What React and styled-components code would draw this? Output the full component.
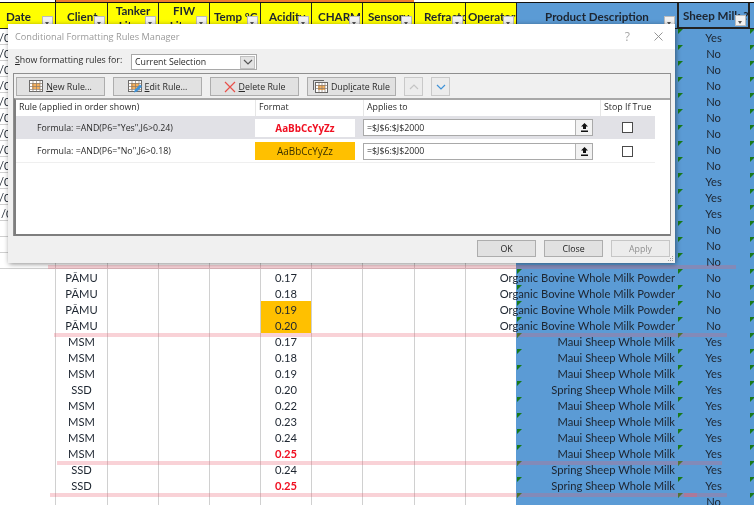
import React from "react";
import styled, { createGlobalStyle } from "styled-components";

const Global = createGlobalStyle`
  html, body { margin: 0; padding: 0; background: #fff; }
  * { box-sizing: border-box; }
`;

const Page = styled.div`
  position: relative;
  width: 754px;
  height: 505px;
  overflow: hidden;
  background: #fff;
  font-family: Lato, "Open Sans", sans-serif;
  color: #1d2530;
  filter: blur(0.3px);
`;

const COLS = "55px 52px 51px 51px 51px 51px 51px 52px 51px 51px 161px 72px 5px";

const TopStrip = styled.div`
  display: grid;
  grid-template-columns: 55px 359px 1fr;
  height: 3px;
  border-bottom: 1px solid #111;
`;
const Orange = styled.div`
  background: #ed7d31;
  border-left: 1px solid #111;
`;
const Row = styled.div`
  display: grid;
  grid-template-columns: ${COLS};
  height: ${p => p.$h || 16}px;
`;
const HeadCell = styled.div`
  position: relative;
  overflow: hidden;
  display: flex;
  align-items: center;
  justify-content: center;
  padding: 1px 2px 0;
  text-align: center;
  line-height: 15px;
  font-size: 11.6px;
  font-weight: 700;
  background: ${p => (p.$blue ? "#5b9bd5" : "#ffff00")};
  border-left: 1px solid #222;
  border-bottom: 1px solid #222;
  white-space: ${p => (p.$wrap ? "normal" : "nowrap")};
  ${p => p.$wrap && "align-items: flex-start; padding-top: 0;"}
  ${p => p.$pad !== undefined && `justify-content: flex-start; padding-left: ${p.$pad}px;`}
  ${p => p.$box && "border-left-width: 2px; border-right: 1px solid #222; border-bottom-width: 2px;"}
  ${p => p.$edge && "border-left: 0;"}
`;
const Filter = styled.span`
  position: absolute;
  right: 2px;
  bottom: 1px;
  width: 11px;
  height: 11px;
  background: #f2f2f2;
  border: 1px solid #bcbcbc;
  &::after {
    content: "";
    position: absolute;
    left: 2px;
    top: 5px;
    border: 2.5px solid transparent;
    border-top: 3px solid #555;
    border-bottom: 0;
  }
`;
const Cell = styled.div`
  position: relative;
  display: flex;
  align-items: center;
  justify-content: ${p => (p.$align === "right" ? "flex-end" : p.$align === "left" ? "flex-start" : "center")};
  padding-top: 1px;
  font-size: 11.2px;
  line-height: 15px;
  white-space: nowrap;
  overflow: ${p => (p.$spill ? "visible" : "hidden")};
  background: ${p => p.$bg || "#fff"};
  color: ${p => p.$color || "#1d2530"};
  font-weight: ${p => (p.$bold ? 700 : 400)};
  border-left: 1px solid ${p => (p.$bg === "#5b9bd5" ? "#5b9bd5" : "#d0d0d0")};
  border-bottom: 1px solid ${p => (p.$bg === "#5b9bd5" ? "#5b9bd5" : p.$bg ? p.$bg : "#d0d0d0")};
  ${p => p.$edge && "border-left: 0;"}
  ${p => p.$tri && `
    &::before {
      content: "";
      position: absolute;
      left: 0;
      top: 0;
      z-index: 1;
      border-top: 5px solid #1a7a1a;
      border-right: 5px solid transparent;
    }
  `}
`;
const Spill = styled.span`
  position: relative;
  margin-right: 2px;
  z-index: 2;
`;
const DateText = styled.span`
  margin-left: ${p => p.$x}px;
`;

const Highlight = styled.div`
  position: absolute;
  z-index: 3;
  left: ${p => p.$x}px;
  top: ${p => p.$y}px;
  width: ${p => p.$w}px;
  height: 4px;
  background: rgba(232, 95, 110, ${p => p.$a || 0.28});
  filter: blur(0.7px);
`;

/* Dialog */
const Dialog = styled.div`
  position: absolute;
  z-index: 10;
  left: 8px;
  top: 24px;
  width: 667px;
  height: 239px;
  display: flex;
  flex-direction: column;
  background: #f0f0f0;
  box-shadow: 1px 1px 5px rgba(0, 0, 0, 0.45);
  font-family: "Open Sans", sans-serif;
  font-size: 8.8px;
  color: #2a2a2a;
  white-space: nowrap;
`;
const TitleBar = styled.div`
  height: 25px;
  flex: none;
  display: flex;
  align-items: center;
  background: #fff;
  padding: 0 12px 1px 7px;
  color: #9a9a9a;
  font-size: 9.2px;
`;
const Title = styled.div`
  flex: 1;
`;
const Help = styled.span`
  color: #a8a8a8;
  font-size: 12px;
  margin-right: 24px;
`;
const ScopeRow = styled.div`
  height: 24px;
  flex: none;
  display: flex;
  align-items: center;
  padding: 2px 0 0 7px;
`;
const ScopeLabel = styled.span`
  width: 116px;
  margin-top: -4px;
`;
const Select = styled.div`
  width: 126px;
  height: 16px;
  display: flex;
  align-items: center;
  justify-content: space-between;
  background: #fff;
  border: 1px solid #a9a9a9;
  padding: 0 1px 0 3px;
`;
const SelectBtn = styled.span`
  width: 15px;
  height: 13px;
  display: flex;
  align-items: center;
  justify-content: center;
  background: #e3e3e3;
  border: 1px solid #c0c0c0;
`;
const Panel = styled.div`
  flex: none;
  height: 163px;
  margin: 0 4px 0 5px;
  border: 1px solid #8f8f8f;
  border-bottom: 0;
  display: flex;
  flex-direction: column;
`;
const Toolbar = styled.div`
  height: 24px;
  flex: none;
  display: flex;
  align-items: center;
  gap: 8px;
  padding: 1px 0 0 2px;
`;
const ToolButton = styled.div`
  width: ${p => p.$w || 89}px;
  height: 19px;
  display: flex;
  align-items: center;
  justify-content: center;
  gap: 3px;
  background: #e1e1e1;
  border: 1px solid #adadad;
  ${p => p.$dim && "background: #ececec; border-color: #c9c9c9;"}
`;
const List = styled.div`
  flex: 1;
  background: #fff;
  border: 2px solid #7e7e7e;
  border-top-color: #a8a8a8;
  border-right: 0;
  display: flex;
  flex-direction: column;
`;
const ListHead = styled.div`
  display: grid;
  grid-template-columns: 239px 108px 237px 55px;
  height: 16px;
  flex: none;
  align-items: center;
`;
const HeadLabel = styled.div`
  padding-left: 3px;
  height: 16px;
  line-height: 15px;
  border-left: ${p => (p.$first ? "0" : "1px solid #e6e6e6")};
`;
const RuleRow = styled.div`
  display: grid;
  grid-template-columns: 239px 108px 237px 55px;
  align-items: center;
  width: 639px;
  height: 23px;
  background: ${p => (p.$active ? "#e1e1e6" : "#fff")};
  border-bottom: ${p => (p.$active ? "0" : "1px solid #efefef")};
  margin-bottom: ${p => (p.$active ? "1px" : "0")};
`;
const Formula = styled.div`
  padding-left: 21px;
`;
const Swatch = styled.div`
  width: 100px;
  height: 18px;
  display: flex;
  align-items: center;
  justify-content: center;
  font-size: 9.9px;
  font-weight: ${p => (p.$red ? 700 : 400)};
  background: ${p => (p.$red ? "#fff" : "#ffc000")};
  color: ${p => (p.$red ? "#f01022" : "#3b3000")};
`;
const RangeInput = styled.div`
  width: 230px;
  height: 17px;
  display: flex;
  align-items: center;
  justify-content: space-between;
  background: #fff;
  border: 1px solid #a9a9a9;
  padding-left: 3px;
`;
const RangeBtn = styled.span`
  width: 17px;
  height: 15px;
  display: flex;
  align-items: center;
  justify-content: center;
  background: #f2f2f2;
  border-left: 1px solid #b5b5b5;
`;
const CheckWrap = styled.div`
  display: flex;
  justify-content: center;
  padding-right: 1px;
`;
const Check = styled.span`
  width: 11px;
  height: 11px;
  background: #fff;
  border: 1px solid #4a4a4a;
`;
const Footer = styled.div`
  flex: 1;
  display: flex;
  justify-content: flex-end;
  align-items: flex-start;
  gap: 8px;
  padding: 4px 5px 0 0;
  position: relative;
`;
const DialogButton = styled.div`
  width: 59px;
  height: 17px;
  display: flex;
  align-items: center;
  justify-content: center;
  background: #e1e1e1;
  border: 1px solid #adadad;
  color: ${p => (p.$off ? "#8f8f8f" : "#222")};
  ${p => p.$off && "background: #ececec; border-color: #c6c6c6;"}
`;
const Grip = styled.svg`
  position: absolute;
  right: 1px;
  bottom: 1px;
`;
const U = styled.span`
  text-decoration: underline;
  text-underline-offset: 1px;
`;

/* Icons */
const GridIcon = ({ pencil }) => (
  <svg width="14" height="13" viewBox="0 0 14 13">
    <rect x="0.5" y="0.5" width="13" height="11" fill="#fff" stroke="#6b6b6b" />
    <rect x="3" y="3" width="8" height="6" fill="#f7b15c" />
    <path d="M0.5 3.5H13.5M0.5 6.5H13.5M0.5 9.5H13.5M4 .5V11.5M7.5 .5V11.5M11 .5V11.5" stroke="#8a7a6a" strokeWidth="0.7" fill="none" />
    {pencil && <path d="M6 12.5l1-3 5-5 2 2-5 5z" fill="#3f93d8" />}
  </svg>
);
const DupIcon = () => (
  <svg width="15" height="14" viewBox="0 0 15 14">
    <path d="M.5 10V.5H11" fill="none" stroke="#666" />
    <rect x="2.5" y="2.5" width="12" height="10" fill="#fff" stroke="#666" />
    <rect x="5" y="5" width="7" height="5" fill="#f7b15c" />
    <path d="M2.5 5.5H14.5M2.5 8.5H14.5M6 2.5V12.5M9 2.5V12.5M12 2.5V12.5" stroke="#8a7a6a" strokeWidth="0.7" fill="none" />
  </svg>
);
const XIcon = () => (
  <svg width="12" height="12" viewBox="0 0 12 12">
    <path d="M1 1l10 10M11 1L1 11" stroke="#e8504a" strokeWidth="1.2" fill="none" />
  </svg>
);
const Chevron = ({ up, color }) => (
  <svg width="10" height="6" viewBox="0 0 10 6">
    <path d={up ? "M1 5l4-4 4 4" : "M1 1l4 4 4-4"} stroke={color} strokeWidth="1.2" fill="none" />
  </svg>
);
const UploadIcon = () => (
  <svg width="9" height="9" viewBox="0 0 9 9">
    <path d="M4.5 0L8 3.5H6V6H3V3.5H1zM1 7.5h7V9H1z" fill="#111" />
  </svg>
);

const HEADERS = [
  { t: "Date", pad: 6, edge: true },
  { t: "Client", pad: 11 },
  { t: "Tanker Litres", wrap: true },
  { t: "FIW Litres", wrap: true },
  { t: "Temp °C", pad: 4 },
  { t: "Acidity", pad: 8 },
  { t: "CHARM", pad: 6 },
  { t: "Sensory", pad: 5 },
  { t: "Refractometer", pad: 9 },
  { t: "Operator", pad: 2 },
  { t: "Product Description", blue: true },
  { t: "Sheep Milk ?", blue: true, pad: 4, box: true },
];

const PB = "Organic Bovine Whole Milk Powder";
const MS = "Maui Sheep Whole Milk";
const SS = "Spring Sheep Whole Milk";
const yesHead = ["Yes", "No", "No", "No", "No", "No", "No", "No", "No", "Yes", "Yes", "Yes", "No", "No", "No"];
const ROWS = [
  ...yesHead.map((s, i) => ({ date: i < 12 ? "/0" : "", dx: i === 11 ? 1 : -1, c: "", a: "", p: "", s })),
  { c: "PĀMU", a: "0.17", p: PB, s: "No" },
  { c: "PĀMU", a: "0.18", p: PB, s: "No" },
  { c: "PĀMU", a: "0.19", p: PB, s: "No", warn: true },
  { c: "PĀMU", a: "0.20", p: PB, s: "No", warn: true },
  { c: "MSM", a: "0.17", p: MS, s: "Yes" },
  { c: "MSM", a: "0.18", p: MS, s: "Yes" },
  { c: "MSM", a: "0.19", p: MS, s: "Yes" },
  { c: "SSD", a: "0.20", p: SS, s: "Yes" },
  { c: "MSM", a: "0.22", p: MS, s: "Yes" },
  { c: "MSM", a: "0.23", p: MS, s: "Yes" },
  { c: "MSM", a: "0.24", p: MS, s: "Yes" },
  { c: "MSM", a: "0.25", p: MS, s: "Yes", alert: true },
  { c: "SSD", a: "0.24", p: SS, s: "Yes" },
  { c: "SSD", a: "0.25", p: SS, s: "Yes", alert: true },
  { c: "", a: "", p: "", s: "No" },
];

const BLUE = "#5b9bd5";

export default function App() {
  return (
    <Page>
      <Global />
      <TopStrip>
        <div />
        <Orange />
        <div />
      </TopStrip>
      <Row $h={26}>
        {HEADERS.map(h => (
          <HeadCell key={h.t} $blue={h.blue} $wrap={h.wrap} $pad={h.pad} $box={h.box} $edge={h.edge}>
            {h.t}
            <Filter />
          </HeadCell>
        ))}
        <HeadCell $blue />
      </Row>
      {ROWS.map((r, i) => (
        <Row key={i}>
          <Cell $align="left" $edge><DateText $x={r.dx || 0}>{r.date}</DateText></Cell>
          <Cell>{r.c}</Cell>
          <Cell />
          <Cell />
          <Cell />
          <Cell $bg={r.warn ? "#ffc000" : undefined} $color={r.alert ? "#f01022" : undefined} $bold={r.alert}>{r.a}</Cell>
          <Cell />
          <Cell />
          <Cell />
          <Cell $spill />
          <Cell $bg={BLUE} $tri $align="right" $spill><Spill>{r.p}</Spill></Cell>
          <Cell $bg={BLUE} $tri>{r.s}</Cell>
          <Cell $bg={BLUE} $tri />
        </Row>
      ))}

      <Highlight $x={48} $y={265} $w={688} />
      <Highlight $x={54} $y={333} $w={673} />
      <Highlight $x={57} $y={461} $w={665} />
      <Highlight $x={50} $y={493} $w={677} />
      <Highlight $x={684} $y={493} $w={13} $a={0.4} />

      <Dialog>
        <TitleBar>
          <Title>Conditional Formatting Rules Manager</Title>
          <Help>?</Help>
          <svg width="9" height="9" viewBox="0 0 9 9">
            <path d="M.5.5l8 8M8.5.5l-8 8" stroke="#8a8a8a" strokeWidth="0.9" fill="none" />
          </svg>
        </TitleBar>
        <ScopeRow>
          <ScopeLabel><U>S</U>how formatting rules for:</ScopeLabel>
          <Select>
            Current Selection
            <SelectBtn><Chevron color="#555" /></SelectBtn>
          </Select>
        </ScopeRow>
        <Panel>
          <Toolbar>
            <ToolButton><GridIcon /><span><U>N</U>ew Rule...</span></ToolButton>
            <ToolButton><GridIcon pencil /><span><U>E</U>dit Rule...</span></ToolButton>
            <ToolButton><XIcon /><span><U>D</U>elete Rule</span></ToolButton>
            <ToolButton><DupIcon /><span>Dupl<U>i</U>cate Rule</span></ToolButton>
            <ToolButton $w={19} $dim><Chevron up color="#c4c4c4" /></ToolButton>
            <ToolButton $w={19} $dim><Chevron color="#3f93d8" /></ToolButton>
          </Toolbar>
          <List>
            <ListHead>
              <HeadLabel $first>Rule (applied in order shown)</HeadLabel>
              <HeadLabel>Format</HeadLabel>
              <HeadLabel>Applies to</HeadLabel>
              <HeadLabel>Stop If True</HeadLabel>
            </ListHead>
            <RuleRow $active>
              <Formula>Formula: =AND(P6="Yes",J6&gt;0.24)</Formula>
              <Swatch $red>AaBbCcYyZz</Swatch>
              <RangeInput>=$J$6:$J$2000<RangeBtn><UploadIcon /></RangeBtn></RangeInput>
              <CheckWrap><Check /></CheckWrap>
            </RuleRow>
            <RuleRow>
              <Formula>Formula: =AND(P6="No",J6&gt;0.18)</Formula>
              <Swatch>AaBbCcYyZz</Swatch>
              <RangeInput>=$J$6:$J$2000<RangeBtn><UploadIcon /></RangeBtn></RangeInput>
              <CheckWrap><Check /></CheckWrap>
            </RuleRow>
          </List>
        </Panel>
        <Footer>
          <DialogButton>OK</DialogButton>
          <DialogButton>Close</DialogButton>
          <DialogButton $off>Apply</DialogButton>
          <Grip width="7" height="7" viewBox="0 0 7 7">
            <path d="M5 1h1v1H5zM3 3h1v1H3zM5 3h1v1H5zM1 5h1v1H1zM3 5h1v1H3zM5 5h1v1H5z" fill="#a0a0a0" />
          </Grip>
        </Footer>
      </Dialog>
    </Page>
  );
}
